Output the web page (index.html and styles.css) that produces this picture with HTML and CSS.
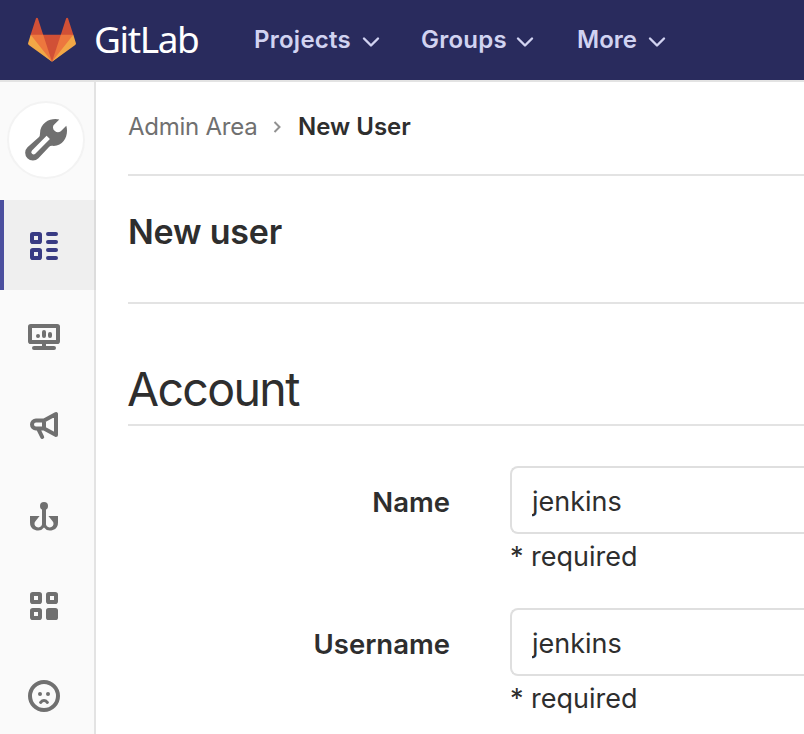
FILE: index.html
```html
<!DOCTYPE html>
<html lang="en">
<head>
<meta charset="utf-8">
<title>New User · Admin Area · GitLab</title>
<link rel="stylesheet" href="styles.css">
</head>
<body>
<header class="navbar">
  <a class="brand">
    <svg class="tanuki" viewBox="0 0 36 36">
      <path class="ear" d="M2 14l9.38 9v-9l-4-12.28c-.205-.632-1.176-.632-1.38 0z"/>
      <path class="ear" d="M34 14l-9.38 9v-9l4-12.28c.205-.632 1.176-.632 1.38 0z"/>
      <path class="ear" d="M18 34.38 3 14h30z"/>
      <path class="eye" d="M18 34.38 11.38 14H2l4 11z"/>
      <path class="eye" d="M18 34.38 24.62 14H34l-4 11z"/>
      <path class="cheek" d="M2 14L.1 20.16c-.18.565 0 1.2.5 1.56l17.42 12.66z"/>
      <path class="cheek" d="M34 14l1.9 6.16c.18.565 0 1.2-.5 1.56L18 34.38z"/>
    </svg>
    <span class="wordmark">GitLab</span>
  </a>
  <nav class="menu">
    <a class="menu-item projects"><span>Projects</span><svg class="caret" viewBox="0 0 18 12"><path d="M2 2.5l7 7 7-7"/></svg></a>
    <a class="menu-item groups"><span>Groups</span><svg class="caret" viewBox="0 0 18 12"><path d="M2 2.5l7 7 7-7"/></svg></a>
    <a class="menu-item more"><span>More</span><svg class="caret" viewBox="0 0 18 12"><path d="M2 2.5l7 7 7-7"/></svg></a>
  </nav>
</header>
<div class="layout">
  <aside class="sidebar">
    <a class="avatar">
      <svg class="wrench" viewBox="0 0 48 48">
        <path d="M37.3 3.6C31 1.500 18 5 18 17.500Q18 20 17 21L5.500 31.200A7.700 7.700 0 0 0 16.400 42.300L27 31Q28.200 29.700 30 29.800C42 31 47 19 44.300 9.800L38.800 15.300A4.900 4.900 0 0 1 31.500 9.300z"/>
        <path class="slot" d="M24.600 19.800L10 34.400A2.300 2.300 0 0 0 13.300 37.700L27.900 23.100z"/>
      </svg>
    </a>
    <a class="side-item active"><svg class="icon" viewBox="0 0 16 16"><g class="line"><rect x="2" y="2" width="4" height="4" rx=".4"/><rect x="2" y="10" width="4" height="4" rx=".4"/><path d="M10 2h4M10 6h4M10 10h4M10 14h4"/></g></svg></a>
    <a class="side-item"><svg class="icon" viewBox="0 0 16 16"><g class="line"><rect x="1" y="3" width="14" height="8" rx=".4"/><path d="M8 11v3M3 14h10M8 6v2M11 7v1M5 8h.01"/></g></svg></a>
    <a class="side-item"><svg class="icon" viewBox="0 0 16 16"><g class="line"><path d="M8 5.300H4a2 2 0 0 0 0 4h4zM8 5.300L14 2v10.500L8 9.300M5.300 9.800l1.800 3.700"/></g></svg></a>
    <a class="side-item"><svg class="icon" viewBox="0 0 16 16"><circle cx="8" cy="3" r="2"/><path d="M7 4h2v8.200a1.900 1.900 0 1 0 3.300-1.600L10.200 8H15v3.200a3.900 3.900 0 0 1-7 2.500 3.900 3.900 0 0 1-7-2.500V8h4.800l-2.100 2.600A1.900 1.900 0 1 0 7 12.200z"/></svg></a>
    <a class="side-item"><svg class="icon" viewBox="0 0 16 16"><g class="line"><rect x="2" y="2" width="4" height="4" rx=".4"/><rect x="10" y="2" width="4" height="4" rx=".4"/><rect x="2" y="10" width="4" height="4" rx=".4"/></g><rect x="9" y="9" width="6" height="6" rx="1.300"/></svg></a>
    <a class="side-item"><svg class="icon" viewBox="0 0 16 16"><g class="line"><circle cx="8" cy="8" r="7"/><path class="mouth" d="M6.300 11.200q1.700-1.900 3.400 0"/></g><circle cx="6" cy="7" r="1"/><circle cx="10" cy="7" r="1"/></svg></a>
  </aside>
  <main class="content">
    <nav class="breadcrumbs">
      <a class="crumb">Admin Area</a>
      <svg class="crumb-sep" viewBox="0 0 8 14"><path d="M1.500 2l5 5-5 5"/></svg>
      <span class="crumb-current">New User</span>
    </nav>
    <h3 class="page-title">New user</h3>
    <form>
      <h2 class="legend">Account</h2>
      <div class="field">
        <label class="label" for="name">Name</label>
        <div class="control"><input class="input" id="name" value="jenkins"><span class="hint">* required</span></div>
      </div>
      <div class="field">
        <label class="label" for="username">Username</label>
        <div class="control"><input class="input" id="username" value="jenkins"><span class="hint">* required</span></div>
      </div>
    </form>
  </main>
</div>
</body>
</html>
```
FILE: styles.css
```css
* { box-sizing: border-box; }
body {
  margin: 0;
  height: 734px;
  overflow: hidden;
  background: #fff;
  color: #2e2e2e;
  font-family: Inter, "Liberation Sans", sans-serif;
  white-space: nowrap;
}
svg { display: block; flex: none; }

.navbar {
  display: flex;
  height: 82px;
  padding-left: 28px;
  background: #292b5d;
  border-bottom: 2px solid #e3e3e3;
}
.brand { display: flex; width: 226px; }
.tanuki { width: 48px; height: 48px; margin-top: 16px; }
.ear { fill: #d15036; }
.eye { fill: #ed773e; }
.cheek { fill: #f2a746; }
.wordmark {
  margin-left: 18px;
  color: #fff;
  font: 400 37px/78px "Noto Sans", sans-serif;
  letter-spacing: -1.4px;
}
.menu { display: flex; color: #d1d3f1; font-size: 24px; font-weight: 600; line-height: 79px; letter-spacing: .25px; }
.menu span { height: 80px; }
.menu-item { display: flex; align-items: center; justify-content: space-between; }
.projects { width: 126px; margin-right: 41px; }
.groups { width: 113px; margin-right: 43px; }
.more { width: 89px; letter-spacing: 0; }
.caret { width: 18px; height: 12px; margin-top: 3px; fill: none; stroke: currentColor; stroke-width: 2.4; stroke-linecap: round; stroke-linejoin: round; }

.layout { display: flex; height: 652px; }
.sidebar { flex: none; width: 96px; background: #fafafa; border-right: 2px solid #e3e3e3; }
.avatar {
  display: flex;
  align-items: center;
  justify-content: center;
  width: 78px;
  height: 78px;
  margin: 19px 0 21px 7px;
  border: 2px solid #f3f3f3;
  border-radius: 50%;
  background: #fff;
}
.wrench { width: 48px; height: 48px; fill: #707070; }
.wrench .slot { fill: #fff; }
.side-item { display: flex; height: 90px; padding: 30px 0 0 28px; }
.active { width: 96px; padding-left: 24px; background: #efefef; border-left: 4px solid #4b4f9e; border-right: 2px solid #dcdcdc; }
.icon { width: 32px; height: 32px; fill: #707070; color: #707070; }
.active .icon { color: #393b83; }
.line { fill: none; stroke: currentColor; stroke-width: 2; stroke-linecap: round; stroke-linejoin: round; }
.mouth { stroke-width: 1.5; }

.content { flex: 1; min-width: 0; padding-left: 32px; }
.breadcrumbs { display: flex; align-items: center; height: 94px; padding-bottom: 2px; border-bottom: 2px solid #e3e3e3; font-size: 24px; line-height: 30px; }
.crumb { width: 144px; color: #707070; letter-spacing: -.25px; }
.crumb-sep { width: 8px; height: 14px; margin: 0 17px 0 1px; fill: none; stroke: #919191; stroke-width: 2; }
.crumb-current { font-weight: 600; }
.page-title { height: 128px; margin: 0; padding-top: 33px; border-bottom: 2px solid #e3e3e3; font-size: 34px; font-weight: 600; line-height: 46px; letter-spacing: -.2px; }
.legend { height: 122px; margin: 0 0 40px; padding-top: 54px; border-bottom: 2px solid #e3e3e3; font-size: 46.5px; font-weight: 400; line-height: 62px; letter-spacing: -1.65px; text-indent: -1px; }
.field { display: flex; height: 142px; }
.label { flex: none; width: 322px; text-align: right; font-size: 27.5px; font-weight: 600; line-height: 73px; }
.control { flex: 1; min-width: 0; display: flex; flex-direction: column; margin-left: 60px; }
.input {
  width: 100%;
  height: 68px;
  padding: 2px 20px 0;
  border: 2px solid #dfdfdf;
  border-right: 0;
  border-radius: 8px 0 0 8px;
  background: #fff;
  color: inherit;
  font: 400 27px/40px Inter, sans-serif;
}
.hint { font-size: 27px; line-height: 46px; }
```
